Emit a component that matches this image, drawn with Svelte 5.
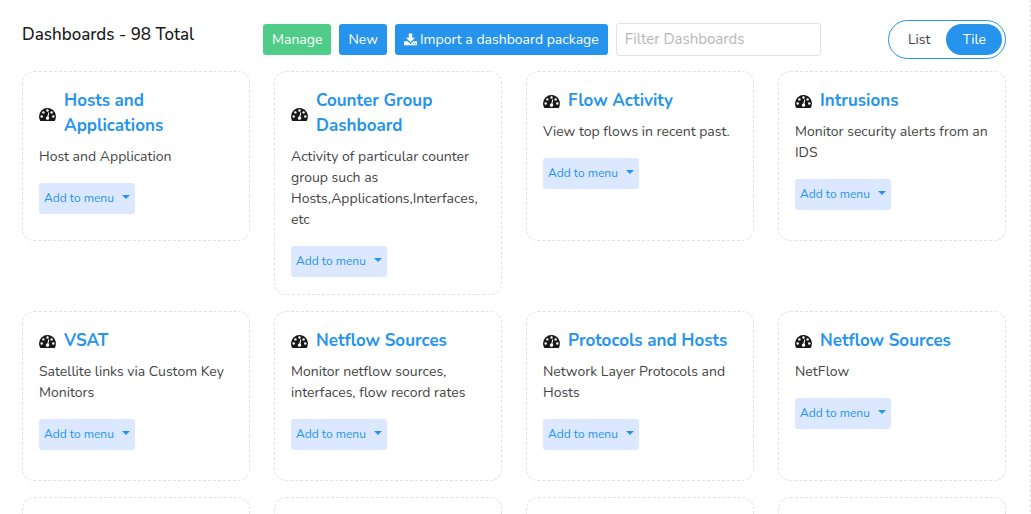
<script>
  let view = $state('tile');
  let filter = $state('');

  const dashboards = [
    { title: 'Hosts and Applications', text: 'Host and Application' },
    { title: 'Counter Group Dashboard', text: 'Activity of particular counter group such as Hosts,Applications,Interfaces, etc' },
    { title: 'Flow Activity', text: 'View top flows in recent past.' },
    { title: 'Intrusions', text: 'Monitor security alerts from an IDS' },
    { title: 'VSAT', text: 'Satellite links via Custom Key Monitors' },
    { title: 'Netflow Sources', text: 'Monitor netflow sources, interfaces, flow record rates' },
    { title: 'Protocols and Hosts', text: 'Network Layer Protocols and Hosts' },
    { title: 'Netflow Sources', text: 'NetFlow' },
  ];
  const pending = [1, 2, 3, 4];
</script>

<main>
  <header>
    <h1>Dashboards - 98 Total</h1>
    <div class="actions">
      <button class="btn green">Manage</button>
      <button class="btn">New</button>
      <button class="btn">
        <svg width="13" height="14" viewBox="0 0 13 14" aria-hidden="true">
          <path fill="currentColor" d="M4.800 .5h3.400v4.200h2.800L6.500 9.200 2 4.700h2.800zM.6 8.200h3.100l2.800 2.700 2.800-2.700h3.100q.6 0 .6.600v2.900q0 .6-.6.6H.6q-.6 0-.6-.6V8.800q0-.6.6-.6zM9.200 10.300v1h1v-1zm1.800 0v1h1v-1z" fill-rule="evenodd" />
        </svg>
        <span>Import a dashboard package</span>
      </button>
      <input type="text" placeholder="Filter Dashboards" aria-label="Filter Dashboards" bind:value={filter} />
    </div>
    <div class="toggle">
      <button class:active={view === 'list'} onclick={() => (view = 'list')}>List</button>
      <button class:active={view === 'tile'} onclick={() => (view = 'tile')}>Tile</button>
    </div>
  </header>

  <section>
    {#each dashboards as item}
      <article>
        <h2>
          <svg width="17" height="14" viewBox="0 0 17 14" aria-hidden="true">
            <path fill="#181818" d="M8.5 0A8.500 8.500 0 0 0 0 8.500c0 1.600.4 3 1.200 4.200.2.200.4.300.7.300h13.200c.3 0 .5-.1.7-.3A8.500 8.500 0 0 0 8.500 0z" />
            <g fill="#fff">
              <circle cx="2.700" cy="8.500" r="1.200" />
              <circle cx="4.400" cy="4.400" r="1.200" />
              <circle cx="8.500" cy="2.500" r="1.200" />
              <circle cx="12.600" cy="4.400" r="1.200" />
              <circle cx="14.300" cy="8.500" r="1.200" />
              <path d="M9.400 4.200l.8.200-.7 4.400q1 .7.7 1.800-.3 1.200-1.700 1.200-1.700-.1-1.700-1.600 0-1.300 1.500-1.600z" />
            </g>
          </svg>
          <a href="#dashboard">{item.title}</a>
        </h2>
        <p>{item.text}</p>
        <button class="menu">Add to menu <i></i></button>
      </article>
    {/each}
    {#each pending as slot (slot)}
      <article></article>
    {/each}
  </section>
</main>

<style>
  :global(body) {
    margin: 0;
    background: #fff;
  }
  main {
    box-sizing: border-box;
    margin-top: -10px;
    padding: 29px 24px 24px 22px;
    border: 1px dashed #dedede;
    border-left: 0;
    border-radius: 0 12px 12px 0;
    font-family: Nunito, Lato, sans-serif;
    font-size: 14px;
    line-height: 21px;
    color: #444;
  }
  button,
  input {
    box-sizing: border-box;
    font: inherit;
  }
  button {
    border: 0;
    cursor: pointer;
  }
  header {
    display: grid;
    grid-template-columns: calc(25% - 5px) 1fr auto;
    margin-bottom: 12px;
  }
  h1 {
    margin: 2px 0 0;
    font-size: 17px;
    line-height: 25px;
    font-weight: 500;
    color: #181818;
  }
  .actions {
    display: flex;
    align-items: center;
    gap: 8px;
  }
  .btn {
    display: flex;
    align-items: center;
    gap: 3px;
    height: 31px;
    padding: 0 9px;
    border-radius: 3px;
    background: #2694ec;
    color: #fff;
    white-space: nowrap;
  }
  .green {
    background: #50cc89;
  }
  .actions input {
    width: 205px;
    height: 33px;
    padding: 0 8px 2px;
    border: 1px solid #e2e2de;
    border-radius: 3px;
    background: #fff;
    color: #444;
    font-size: 15px;
  }
  .actions input::placeholder {
    color: #b8b8b8;
    opacity: 1;
  }
  .toggle {
    display: flex;
    padding: 3px;
    border: 1px solid #2694ec;
    border-radius: 20px;
  }
  .toggle button {
    min-width: 54px;
    height: 31px;
    padding: 0 16px;
    border-radius: 16px;
    background: transparent;
    color: #444;
  }
  .toggle .active {
    background: #2694ec;
    color: #fff;
  }
  section {
    display: grid;
    grid-template-columns: repeat(4, minmax(0, 1fr));
    align-items: start;
    gap: 16px 24px;
  }
  article {
    box-sizing: border-box;
    min-height: 170px;
    padding: 16px 16px 17px;
    border: 1px dashed #e2e2e2;
    border-radius: 12px;
  }
  h2 {
    display: flex;
    align-items: center;
    gap: 8px;
    margin: 0 0 8px;
    font-size: 17px;
    line-height: 25px;
    font-weight: 700;
  }
  h2 svg {
    flex: none;
    margin-top: 3px;
  }
  a {
    color: #2694ec;
    text-decoration: none;
  }
  p {
    margin: 0 0 16px;
  }
  .menu {
    display: flex;
    align-items: center;
    justify-content: space-between;
    width: 96px;
    height: 31px;
    padding: 0 5px;
    border-radius: 3px;
    background: #dbe8ff;
    color: #2694ec;
    font-size: 12px;
  }
  .menu i {
    margin-bottom: 4px;
    border: 4px solid transparent;
    border-top-color: currentColor;
    border-bottom: 0;
  }
</style>
